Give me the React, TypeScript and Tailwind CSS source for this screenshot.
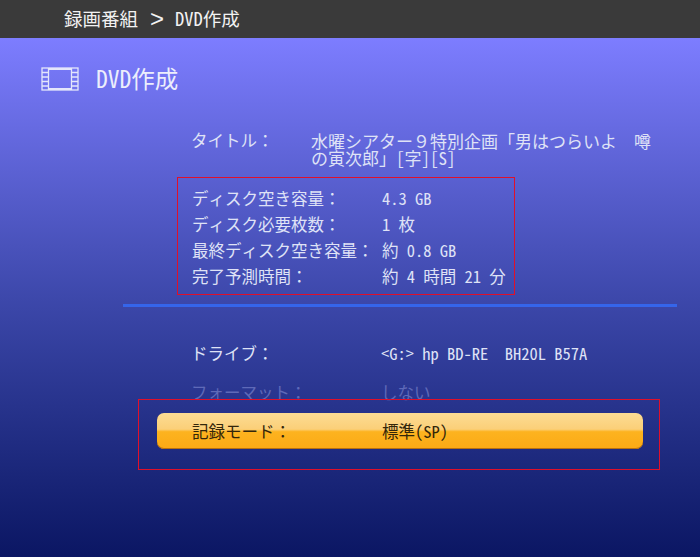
const font = { fontFamily: '"Noto Sans Mono CJK JP","Noto Sans CJK JP","Liberation Mono",monospace' };

function Row({ label, value, cls = "" }: { label: string; value: string; cls?: string }) {
  return (
    <div className={`flex h-[26px] text-[16.5px] leading-[26px] ${cls}`}>
      <span className="w-[190px] whitespace-pre">{label}</span>
      <span className="whitespace-pre">{value}</span>
    </div>
  );
}

function Film() {
  return (
    <svg width="38" height="24" viewBox="0 0 38 24" fill="none" stroke="#e4e6fb" strokeWidth="1.3">
      <rect x="1" y="1" width="36" height="22" />
      <path d="M7.5 1v22M30.5 1v22M1 5.5h6.5M1 10h6.5M1 14.5h6.5M1 19h6.5M30.5 5.5h6.5M30.5 10h6.5M30.5 14.5h6.5M30.5 19h6.5" />
      <path d="M8 2h22M8 22h22" strokeWidth="1.8" />
    </svg>
  );
}

export default function App() {
  return (
    <div style={font} className="flex h-[557px] w-[700px] flex-col overflow-hidden text-[#dfe2f6]">
      <header className="flex h-[38px] shrink-0 items-center bg-[#3a3a3a] pl-[64px] text-[18.5px] whitespace-pre text-[#f2f2f2]">
        <span>録画番組</span>
        <span className="ml-[12px] font-['Liberation_Sans',sans-serif] text-[24px] leading-[24px]">&gt;</span>
        <span className="ml-[11px]">DVD作成</span>
      </header>
      <main className="flex flex-1 flex-col bg-gradient-to-b from-[#7d7dff] via-[#3d48ab] via-50% to-[#0b1663]">
        <div className="flex items-center gap-[17px] pt-[26px] pl-[41px]">
          <Film />
          <h1 className="mb-[2px] text-[23.5px] leading-[28px] text-[#eceefc]">DVD作成</h1>
        </div>
        <section className="mt-[38px] flex pl-[191px] text-[17px] leading-[17px]">
          <span className="w-[120px] shrink-0 text-[16.5px] whitespace-pre">タイトル：</span>
          <p className="w-[345px]">水曜シアター９特別企画「男はつらいよ　噂の寅次郎」[字][S]</p>
        </section>
        <section className="mt-[11px] ml-[177px] h-[118px] w-[338px] border border-[#e0102a] pt-[7px] pl-[14px]">
          <Row label="ディスク空き容量：" value="4.3 GB" />
          <Row label="ディスク必要枚数：" value="1 枚" />
          <Row label="最終ディスク空き容量：" value="約 0.8 GB" />
          <Row label="完了予測時間：" value="約 4 時間 21 分" />
        </section>
        <hr className="mt-[9px] ml-[123px] h-[3px] w-[554px] border-0 bg-[#3565ea]" />
        <Row label="ドライブ：" value="<G:> hp BD-RE  BH20L B57A" cls="mt-[33px] ml-[191px]" />
        <Row label="フォーマット：" value="しない" cls="mt-[13px] ml-[191px] text-[#5f69b8]" />
        <section className="mt-[-6px] ml-[138px] h-[71px] w-[522px] border border-[#e0102a] pt-[13px] pl-[18px]">
          <div className="flex h-[36px] w-[486px] items-center rounded-[7px] bg-[linear-gradient(#fcdc94,#fbcf78_45%,#fdb31f_52%,#fba915)] pl-[35px] text-[16.5px] text-[#33260a] shadow-[inset_0_-1px_0_#b8700f]">
            <span className="w-[190px] whitespace-pre">記録モード：</span>
            <span className="whitespace-pre">標準(SP)</span>
          </div>
        </section>
      </main>
    </div>
  );
}
